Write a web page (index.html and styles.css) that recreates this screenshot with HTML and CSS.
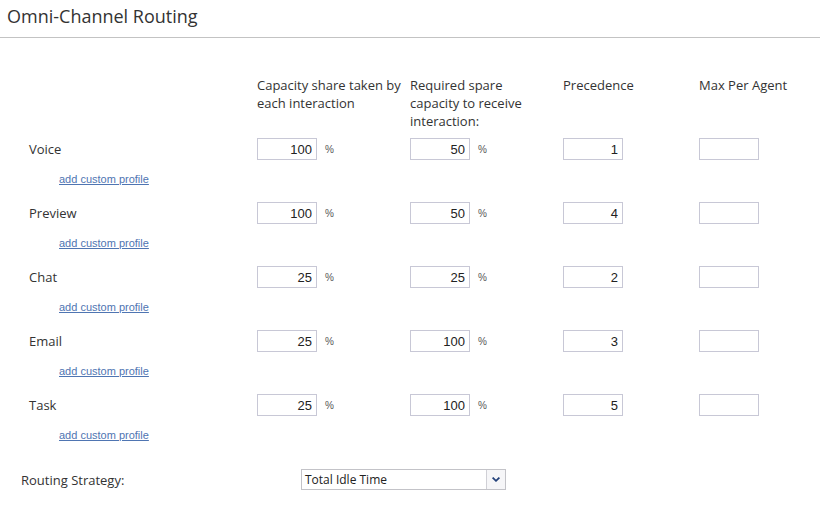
FILE: index.html
```html
<!DOCTYPE html>
<html>
<head>
<meta charset="utf-8">
<link rel="stylesheet" href="styles.css">
</head>
<body>
<div class="title">Omni-Channel Routing</div>
<div class="content">
  <div class="grid header">
    <div></div>
    <div>Capacity share taken by each interaction</div>
    <div class="narrow">Required spare capacity to receive interaction:</div>
    <div>Precedence</div>
    <div>Max Per Agent</div>
  </div>

  <div class="channel">
    <div class="grid row">
      <div class="label">Voice</div>
      <div class="cell"><input class="num" value="100"><span class="pct">%</span></div>
      <div class="cell"><input class="num" value="50"><span class="pct">%</span></div>
      <div class="cell"><input class="num" value="1"></div>
      <div class="cell"><input class="num" value=""></div>
    </div>
    <a class="link" href="#">add custom profile</a>
  </div>

  <div class="channel">
    <div class="grid row">
      <div class="label">Preview</div>
      <div class="cell"><input class="num" value="100"><span class="pct">%</span></div>
      <div class="cell"><input class="num" value="50"><span class="pct">%</span></div>
      <div class="cell"><input class="num" value="4"></div>
      <div class="cell"><input class="num" value=""></div>
    </div>
    <a class="link" href="#">add custom profile</a>
  </div>

  <div class="channel">
    <div class="grid row">
      <div class="label">Chat</div>
      <div class="cell"><input class="num" value="25"><span class="pct">%</span></div>
      <div class="cell"><input class="num" value="25"><span class="pct">%</span></div>
      <div class="cell"><input class="num" value="2"></div>
      <div class="cell"><input class="num" value=""></div>
    </div>
    <a class="link" href="#">add custom profile</a>
  </div>

  <div class="channel">
    <div class="grid row">
      <div class="label">Email</div>
      <div class="cell"><input class="num" value="25"><span class="pct">%</span></div>
      <div class="cell"><input class="num" value="100"><span class="pct">%</span></div>
      <div class="cell"><input class="num" value="3"></div>
      <div class="cell"><input class="num" value=""></div>
    </div>
    <a class="link" href="#">add custom profile</a>
  </div>

  <div class="channel">
    <div class="grid row">
      <div class="label">Task</div>
      <div class="cell"><input class="num" value="25"><span class="pct">%</span></div>
      <div class="cell"><input class="num" value="100"><span class="pct">%</span></div>
      <div class="cell"><input class="num" value="5"></div>
      <div class="cell"><input class="num" value=""></div>
    </div>
    <a class="link" href="#">add custom profile</a>
  </div>
</div>

<div class="strategy">
  <div class="strategy-label">Routing Strategy:</div>
  <div class="select">
    <span class="select-text">Total Idle Time</span>
    <span class="select-btn">
      <svg width="8" height="5" viewBox="0 0 8 5"><path d="M0.6 0.6 L4 3.8 L7.4 0.6" fill="none" stroke="#23417a" stroke-width="1.8"/></svg>
    </span>
  </div>
</div>
</body>
</html>
```
FILE: styles.css
```css
html, body {
  margin: 0;
  padding: 0;
  background: #ffffff;
  color: #333333;
  font-family: "Open Sans", "Noto Sans", sans-serif;
}
.title {
  font-size: 18px;
  line-height: 22px;
  padding: 5px 7px 0 7px;
  height: 32px;
  border-bottom: 1px solid #c3c3c3;
  color: #333;
}
.content {
  padding: 38px 0 0 29px;
}
.grid {
  display: grid;
  grid-template-columns: 228px 153px 153px 136px 110px;
}
.header {
  font-size: 13px;
  line-height: 18px;
  height: 62px;
}
.header > div {
  padding-right: 4px;
}
.header > .narrow {
  max-width: 128px;
}
.row {
  height: 22px;
  align-items: center;
  font-size: 13px;
}
.label {
  font-size: 13px;
}
.cell {
  display: flex;
  align-items: center;
}
.num {
  box-sizing: border-box;
  width: 60px;
  height: 22px;
  border: 1px solid #c8c8d6;
  padding: 0 4px 0 2px;
  margin: 0;
  text-align: right;
  font-family: "Liberation Sans", Arial, sans-serif;
  font-size: 13px;
  color: #222;
  background: #fff;
  outline: none;
}
.pct {
  font-family: "Liberation Sans", Arial, sans-serif;
  font-size: 10px;
  color: #555;
  margin-left: 8px;
}
.channel {
  height: 64px;
}
.link {
  display: block;
  margin: 12px 0 0 30px;
  font-family: "Liberation Sans", Arial, sans-serif;
  font-size: 11px;
  line-height: 14px;
  color: #4f75b2;
  text-decoration: underline;
  width: max-content;
}
.strategy {
  display: flex;
  align-items: center;
  padding: 11px 0 0 21px;
}
.strategy-label {
  width: 280px;
  font-size: 13px;
}
.select {
  box-sizing: border-box;
  width: 205px;
  height: 21px;
  border: 1px solid #c3c3c8;
  display: flex;
  align-items: center;
  background: #fff;
}
.select-text {
  flex: 1;
  font-size: 12px;
  padding-left: 3px;
  color: #222;
}
.select-btn {
  width: 18px;
  height: 19px;
  border-left: 1px solid #d0d0d6;
  background: #f6f6f8;
  display: flex;
  align-items: center;
  justify-content: center;
}
```
